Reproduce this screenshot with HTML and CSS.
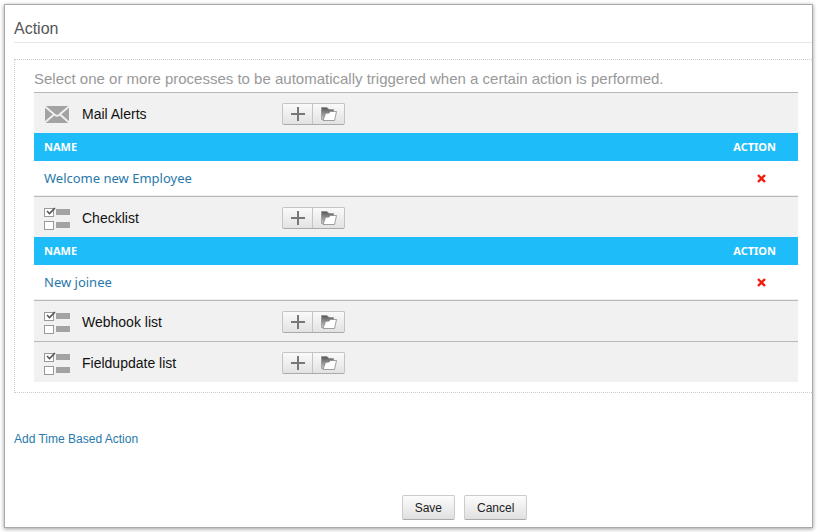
FILE: index.html
```html
<!DOCTYPE html>
<html lang="en">
<head>
  <meta charset="UTF-8">
  <title>Action</title>
  <link rel="stylesheet" href="styles.css">
</head>
<body>
  <!-- shared icons -->
  <svg class="sprite" aria-hidden="true">
    <symbol id="icon-mail" viewBox="0 0 26 18">
      <rect x="1" y="1" width="24" height="17" fill="#a3a3a3"/>
      <path d="M1 1.500 L11 10 Q13 11.500 15 10 L25 1.500 M1 17.500 L10 9.500 M25 17.500 L16 9.500" fill="none" stroke="#f1f1f1" stroke-width="1.800"/>
    </symbol>
    <symbol id="icon-list" viewBox="0 0 26 24">
      <rect x=".5" y="2.500" width="9" height="8" fill="#fff" stroke="#999"/>
      <rect x=".5" y="15.500" width="9" height="8" fill="#fff" stroke="#999"/>
      <rect x="12" y="3" width="14" height="6" fill="#a3a3a3"/>
      <rect x="12" y="16" width="14" height="6" fill="#a3a3a3"/>
      <path d="M3 5 L5.500 7.500 L11 2" fill="none" stroke="#555" stroke-width="1.600"/>
    </symbol>
    <symbol id="icon-plus" viewBox="0 0 14 14">
      <path d="M7 0 V14 M0 7 H14" stroke="#777" stroke-width="2"/>
    </symbol>
    <linearGradient id="folder-back" x1="0" y1="0" x2="0" y2="1">
      <stop offset="0" stop-color="#555"/>
      <stop offset="1" stop-color="#ccc"/>
    </linearGradient>
    <symbol id="icon-folder" viewBox="0 0 16 14">
      <path d="M.5 12.500 V.5 H6 L8 2.500 H12.500 V6 H5 L3 12.500 Z" fill="url(#folder-back)" stroke="#888" stroke-width=".6"/>
      <path d="M2 13.500 L4.500 6.500 L8 6 L9.500 4.500 H15.500 L13.500 13.500 Z" fill="#fff" stroke="#888" stroke-width=".8"/>
    </symbol>
    <symbol id="icon-cross" viewBox="0 0 9 9">
      <path d="M1 1 L8 8 M8 1 L1 8" stroke="#f21c0d" stroke-width="2.400"/>
    </symbol>
  </svg>

  <div class="panel">
    <h1>Action</h1>

    <div class="process-box">
      <p class="hint">Select one or more processes to be automatically triggered when a certain action is performed.</p>

      <section class="process">
        <div class="process-head">
          <svg class="icon-mail"><use href="#icon-mail"/></svg>
          <h2>Mail Alerts</h2>
          <div class="btn-group">
            <button type="button" aria-label="Add mail alert"><svg class="icon-plus"><use href="#icon-plus"/></svg></button>
            <button type="button" aria-label="Browse mail alerts"><svg class="icon-folder"><use href="#icon-folder"/></svg></button>
          </div>
        </div>
        <table>
          <thead>
            <tr><th>NAME</th><th class="action">ACTION</th></tr>
          </thead>
          <tbody>
            <tr>
              <td><a href="#">Welcome new Employee</a></td>
              <td class="action"><button type="button" class="remove" aria-label="Remove"><svg class="icon-cross"><use href="#icon-cross"/></svg></button></td>
            </tr>
          </tbody>
        </table>
      </section>

      <section class="process">
        <div class="process-head">
          <svg class="icon-list"><use href="#icon-list"/></svg>
          <h2>Checklist</h2>
          <div class="btn-group">
            <button type="button" aria-label="Add checklist"><svg class="icon-plus"><use href="#icon-plus"/></svg></button>
            <button type="button" aria-label="Browse checklists"><svg class="icon-folder"><use href="#icon-folder"/></svg></button>
          </div>
        </div>
        <table>
          <thead>
            <tr><th>NAME</th><th class="action">ACTION</th></tr>
          </thead>
          <tbody>
            <tr>
              <td><a href="#">New joinee</a></td>
              <td class="action"><button type="button" class="remove" aria-label="Remove"><svg class="icon-cross"><use href="#icon-cross"/></svg></button></td>
            </tr>
          </tbody>
        </table>
      </section>

      <section class="process">
        <div class="process-head">
          <svg class="icon-list"><use href="#icon-list"/></svg>
          <h2>Webhook list</h2>
          <div class="btn-group">
            <button type="button" aria-label="Add webhook"><svg class="icon-plus"><use href="#icon-plus"/></svg></button>
            <button type="button" aria-label="Browse webhooks"><svg class="icon-folder"><use href="#icon-folder"/></svg></button>
          </div>
        </div>
      </section>

      <section class="process">
        <div class="process-head">
          <svg class="icon-list"><use href="#icon-list"/></svg>
          <h2>Fieldupdate list</h2>
          <div class="btn-group">
            <button type="button" aria-label="Add field update"><svg class="icon-plus"><use href="#icon-plus"/></svg></button>
            <button type="button" aria-label="Browse field updates"><svg class="icon-folder"><use href="#icon-folder"/></svg></button>
          </div>
        </div>
      </section>
    </div>

    <a href="#" class="add-link">Add Time Based Action</a>

    <div class="buttons">
      <button type="submit" class="btn">Save</button>
      <button type="button" class="btn">Cancel</button>
    </div>
  </div>
</body>
</html>
```
FILE: styles.css
```css
* {
  margin: 0;
  padding: 0;
  box-sizing: border-box;
}

body {
  padding: 5px;
  background: #fff;
  font-family: "Liberation Sans", Arial, Helvetica, sans-serif;
  color: #222;
}

svg {
  display: block;
}

a {
  color: #2779aa;
  text-decoration: none;
}

a:hover {
  text-decoration: underline;
}

button {
  font-family: inherit;
  cursor: pointer;
}

.sprite {
  position: absolute;
  width: 0;
  height: 0;
}

.panel {
  padding: 12px 0 7px 9px;
  background: #fff;
  box-shadow: 0 0 0 1px #aaa, 0 1px 4px 1px rgba(0, 0, 0, 0.4);
}

h1 {
  padding-bottom: 1px;
  border-bottom: 1px solid #e8e8e8;
  font-size: 16px;
  font-weight: normal;
  line-height: 24px;
  color: #555;
}

/* Process list */
.process-box {
  margin-top: 16px;
  padding: 9px 14px 10px 19px;
  border: 1px dotted #ccc;
  border-right: none;
}

.hint {
  padding-bottom: 4px;
  font-size: 15px;
  line-height: 19px;
  color: #999;
}

.process-head {
  display: flex;
  align-items: center;
  padding: 10px 10px 8px;
  border-top: 1px solid #b8b8b8;
  background: #f1f1f1;
}

.process-head h2 {
  width: 200px;
  margin-left: 12px;
  font-size: 14px;
  font-weight: normal;
  line-height: 22px;
  color: #111;
}

.icon-mail {
  width: 26px;
  height: 18px;
}

.icon-list {
  width: 26px;
  height: 24px;
  margin: -1px 0;
}

.icon-plus {
  width: 14px;
  height: 14px;
}

.icon-folder {
  width: 16px;
  height: 14px;
}

.icon-cross {
  width: 9px;
  height: 9px;
}

.btn-group {
  display: flex;
  border: 1px solid #c4c4c4;
  border-bottom-color: #aaa;
  border-radius: 2px;
}

.btn-group button {
  display: flex;
  align-items: center;
  justify-content: center;
  width: 29px;
  height: 20px;
  border: none;
  background: linear-gradient(#fafafa, #e2e2e2);
}

.btn-group button + button {
  width: 32px;
  border-left: 1px solid #c4c4c4;
}

/* Selected entries */
table {
  width: 100%;
  border-collapse: separate;
  border-spacing: 0;
  font-family: "Noto Sans", "Lucida Grande", sans-serif;
}

th {
  height: 28px;
  padding-bottom: 2px;
  padding-left: 10px;
  background: #1ebcf9;
  font-size: 11px;
  font-weight: bold;
  text-align: left;
  color: #fff;
}

td {
  height: 35px;
  padding-left: 10px;
  border-bottom: 1px solid #eee;
  font-size: 13px;
}

.action {
  width: 88px;
  padding-left: 0;
  padding-right: 22px;
  text-align: right;
}

.remove {
  padding: 0 10px 2px 0;
  border: none;
  background: none;
  vertical-align: middle;
}

.add-link {
  display: inline-block;
  margin-top: 38px;
  font-size: 12px;
  line-height: 16px;
}

/* Form buttons */
.buttons {
  display: flex;
  justify-content: center;
  gap: 9px;
  margin-top: 48px;
  padding-left: 103px;
}

.btn {
  height: 25px;
  padding: 0 12px;
  border: 1px solid #ccc;
  border-bottom-color: #aaa;
  border-radius: 2px;
  background: linear-gradient(#fcfcfc, #e0e0e0);
  font-size: 12px;
  color: #222;
}
```
